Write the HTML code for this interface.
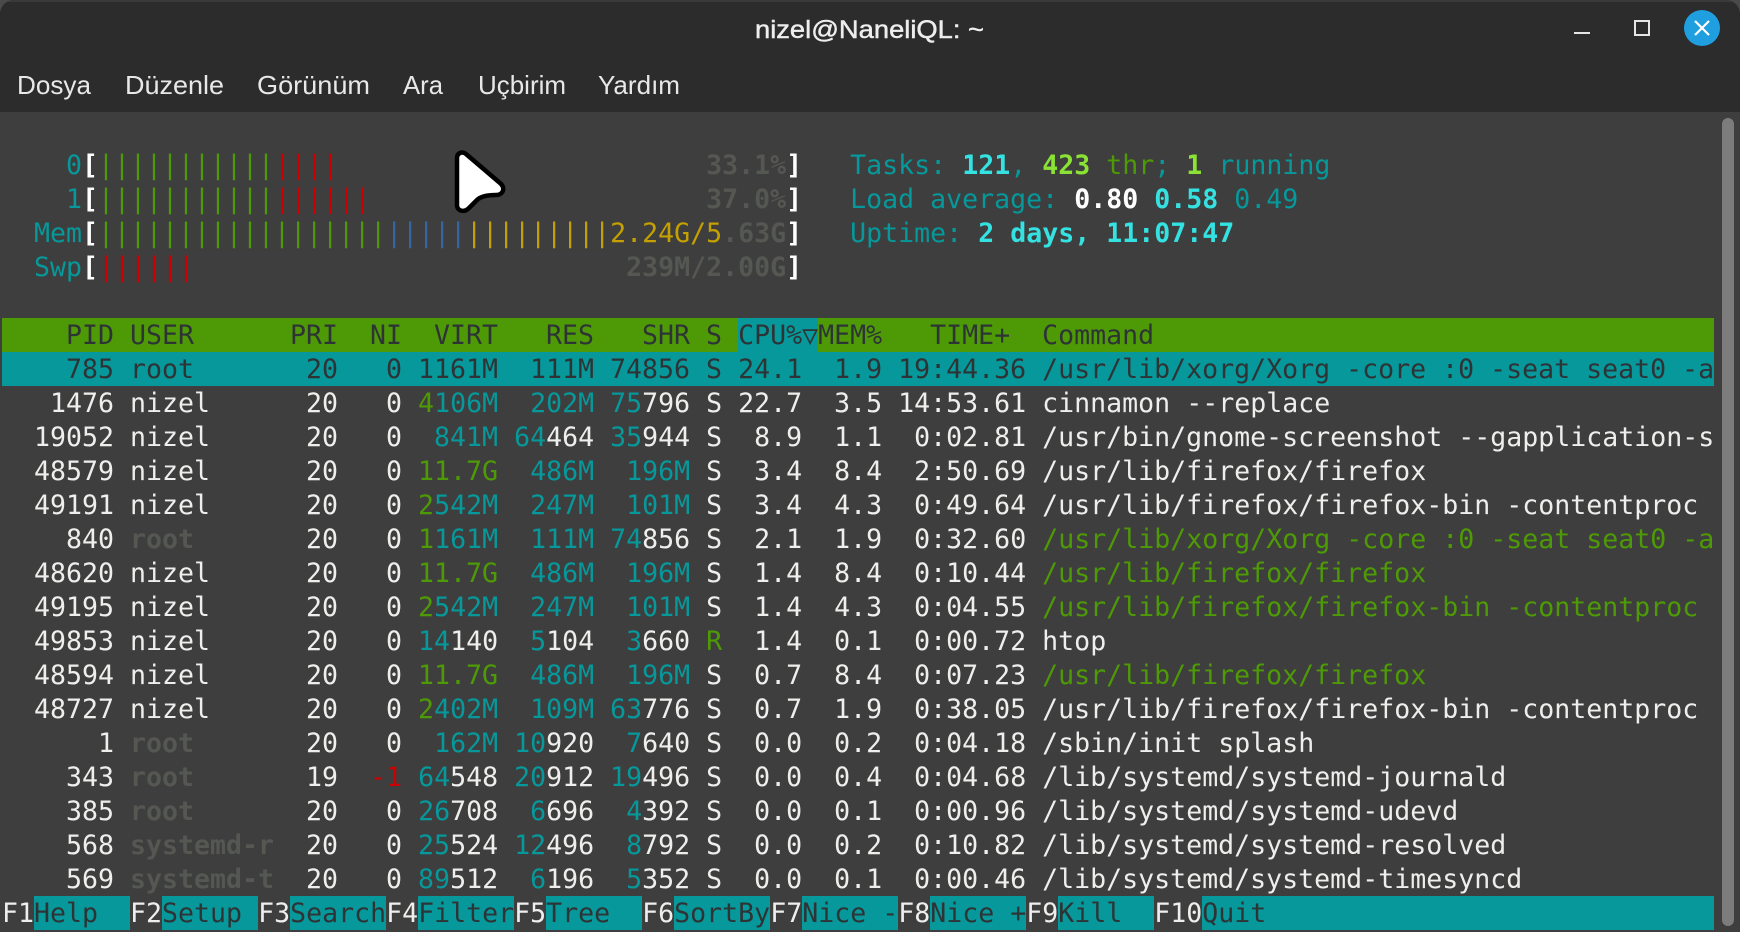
<!DOCTYPE html>
<html lang="tr">
<head>
<meta charset="utf-8">
<title>nizel@NaneliQL: ~</title>
<style>
html,body{margin:0;padding:0;width:1740px;height:932px;overflow:hidden;background:#4a4a4a}
#win{position:absolute;left:0;top:0;width:1740px;height:932px;background:#3e3e3e;border-radius:14px 14px 0 0;overflow:hidden}
#top{position:absolute;left:0;top:0;width:1740px;height:112px;background:#2c2c2c;border-top:2px solid #3a3a3a;box-sizing:border-box}
#term{position:absolute;left:2px;top:114px;width:1712px;font-family:"DejaVu Sans Mono","Liberation Mono",monospace;font-size:26.58px;line-height:36px;color:#eeeeec;white-space:pre}
.l{height:34px;line-height:36px;white-space:pre}
.c{color:#06989a}.g{color:#4e9a06}.k{color:#555753;font-weight:bold}.r{color:#cc0000}.y{color:#c4a000}.u{color:#3465a4}
.B{font-weight:bold}.bc{color:#34e2e2;font-weight:bold}.bg{color:#8ae234;font-weight:bold}.W{color:#fff;font-weight:bold}
.hd{background:#4e9a06;color:#2e3436}
.sel{background:#06989a;color:#2e3436}
.hl{display:inline-block;height:34px;background:#06989a;vertical-align:top}
.ft{color:#eeeeec}
.b{display:inline-block;height:34px;background:#06989a;color:#2e3436;vertical-align:top}
svg{position:absolute;left:0;top:0}
#sb{position:absolute;left:1722px;top:118px;width:12px;height:808px;background:#7c7c7c;border-radius:6px}
</style>
</head>
<body>
<div id="win">
<div id="top"></div>
<div id="term"><div class="l"> </div><div class="l">    <span class="c">0</span><span class="W">[</span><span class="g">|||||||||||</span><span class="r">||||</span>                       <span class="k">33.1%</span><span class="W">]</span>   <span class="c">Tasks: </span><span class="bc">121</span><span class="c">, </span><span class="bg">423</span> <span class="g">thr</span><span class="c">; </span><span class="bg">1</span> <span class="c">running</span></div><div class="l">    <span class="c">1</span><span class="W">[</span><span class="g">|||||||||||</span><span class="r">||||||</span>                     <span class="k">37.0%</span><span class="W">]</span>   <span class="c">Load average: </span><span class="W">0.80</span> <span class="bc">0.58</span> <span class="c">0.49</span></div><div class="l">  <span class="c">Mem</span><span class="W">[</span><span class="g">||||||||||||||||||</span><span class="u">|||||</span><span class="y">|||||||||2.24G/5</span><span class="k">.63G</span><span class="W">]</span>   <span class="c">Uptime: </span><span class="bc">2 days, 11:07:47</span></div><div class="l">  <span class="c">Swp</span><span class="W">[</span><span class="r">||||||</span>                           <span class="k">239M/2.00G</span><span class="W">]</span></div><div class="l"> </div><div class="l hd">    PID USER      PRI  NI  VIRT   RES   SHR S <span class="hl">CPU%▽</span>MEM%   TIME+  Command</div><div class="l sel">    785 root       20   0 1161M  111M 74856 S 24.1  1.9 19:44.36 /usr/lib/xorg/Xorg -core :0 -seat seat0 -a</div><div class="l">   1476 nizel      20   0 <span class="g">4</span><span class="c">106M</span>  <span class="c">202M</span> <span class="c">75</span>796 S 22.7  3.5 14:53.61 cinnamon --replace</div><div class="l">  19052 nizel      20   0  <span class="c">841M</span> <span class="c">64</span>464 <span class="c">35</span>944 S  8.9  1.1  0:02.81 /usr/bin/gnome-screenshot --gapplication-s</div><div class="l">  48579 nizel      20   0 <span class="g">11.7G</span>  <span class="c">486M</span>  <span class="c">196M</span> S  3.4  8.4  2:50.69 /usr/lib/firefox/firefox</div><div class="l">  49191 nizel      20   0 <span class="g">2</span><span class="c">542M</span>  <span class="c">247M</span>  <span class="c">101M</span> S  3.4  4.3  0:49.64 /usr/lib/firefox/firefox-bin -contentproc</div><div class="l">    840 <span class="k">root</span>       20   0 <span class="g">1</span><span class="c">161M</span>  <span class="c">111M</span> <span class="c">74</span>856 S  2.1  1.9  0:32.60 <span class="g">/usr/lib/xorg/Xorg -core :0 -seat seat0 -a</span></div><div class="l">  48620 nizel      20   0 <span class="g">11.7G</span>  <span class="c">486M</span>  <span class="c">196M</span> S  1.4  8.4  0:10.44 <span class="g">/usr/lib/firefox/firefox</span></div><div class="l">  49195 nizel      20   0 <span class="g">2</span><span class="c">542M</span>  <span class="c">247M</span>  <span class="c">101M</span> S  1.4  4.3  0:04.55 <span class="g">/usr/lib/firefox/firefox-bin -contentproc</span></div><div class="l">  49853 nizel      20   0 <span class="c">14</span>140  <span class="c">5</span>104  <span class="c">3</span>660 <span class="g">R</span>  1.4  0.1  0:00.72 htop</div><div class="l">  48594 nizel      20   0 <span class="g">11.7G</span>  <span class="c">486M</span>  <span class="c">196M</span> S  0.7  8.4  0:07.23 <span class="g">/usr/lib/firefox/firefox</span></div><div class="l">  48727 nizel      20   0 <span class="g">2</span><span class="c">402M</span>  <span class="c">109M</span> <span class="c">63</span>776 S  0.7  1.9  0:38.05 /usr/lib/firefox/firefox-bin -contentproc</div><div class="l">      1 <span class="k">root</span>       20   0  <span class="c">162M</span> <span class="c">10</span>920  <span class="c">7</span>640 S  0.0  0.2  0:04.18 /sbin/init splash</div><div class="l">    343 <span class="k">root</span>       19  <span class="r">-1</span> <span class="c">64</span>548 <span class="c">20</span>912 <span class="c">19</span>496 S  0.0  0.4  0:04.68 /lib/systemd/systemd-journald</div><div class="l">    385 <span class="k">root</span>       20   0 <span class="c">26</span>708  <span class="c">6</span>696  <span class="c">4</span>392 S  0.0  0.1  0:00.96 /lib/systemd/systemd-udevd</div><div class="l">    568 <span class="k">systemd-r</span>  20   0 <span class="c">25</span>524 <span class="c">12</span>496  <span class="c">8</span>792 S  0.0  0.2  0:10.82 /lib/systemd/systemd-resolved</div><div class="l">    569 <span class="k">systemd-t</span>  20   0 <span class="c">89</span>512  <span class="c">6</span>196  <span class="c">5</span>352 S  0.0  0.1  0:00.46 /lib/systemd/systemd-timesyncd</div><div class="l ft">F1<span class="b">Help  </span>F2<span class="b">Setup </span>F3<span class="b">Search</span>F4<span class="b">Filter</span>F5<span class="b">Tree  </span>F6<span class="b">SortBy</span>F7<span class="b">Nice -</span>F8<span class="b">Nice +</span>F9<span class="b">Kill  </span>F10<span class="b">Quit                            </span></div></div>
<div id="sb"></div>
<svg width="1740" height="932" viewBox="0 0 1740 932" xmlns="http://www.w3.org/2000/svg">
<g font-family="'Liberation Sans',sans-serif" fill="#e8e8e8" font-size="26">
<text x="755" y="38" font-size="25" stroke="#eeeeee" stroke-width="0.45" textLength="229" lengthAdjust="spacingAndGlyphs" fill="#eeeeee">nizel@NaneliQL: ~</text>
<text x="17" y="94" textLength="74" lengthAdjust="spacingAndGlyphs">Dosya</text>
<text x="125" y="94" textLength="99" lengthAdjust="spacingAndGlyphs">Düzenle</text>
<text x="257" y="94" textLength="113" lengthAdjust="spacingAndGlyphs">Görünüm</text>
<text x="403" y="94" textLength="40" lengthAdjust="spacingAndGlyphs">Ara</text>
<text x="478" y="94" textLength="88" lengthAdjust="spacingAndGlyphs">Uçbirim</text>
<text x="598" y="94" textLength="82" lengthAdjust="spacingAndGlyphs">Yardım</text>
</g>
<rect x="1574" y="32" width="16" height="2" fill="#e6e6e6"/>
<rect x="1635" y="21" width="14" height="14" fill="none" stroke="#e6e6e6" stroke-width="2"/>
<circle cx="1702" cy="28" r="18" fill="#1f9fe0"/>
<path d="M1695 21L1709 35M1709 21L1695 35" stroke="#ffffff" stroke-width="2.2" fill="none"/>
<path d="M457 158C457 153 462 151 466 154L500 183C506 188 503 195 496 195C488 195 481 196 477 200L469 208C464 213 457 211 457 205Z" fill="#ffffff" stroke="#000000" stroke-width="4.5" stroke-linejoin="round"/>
</svg>
</div>
</body>
</html>
